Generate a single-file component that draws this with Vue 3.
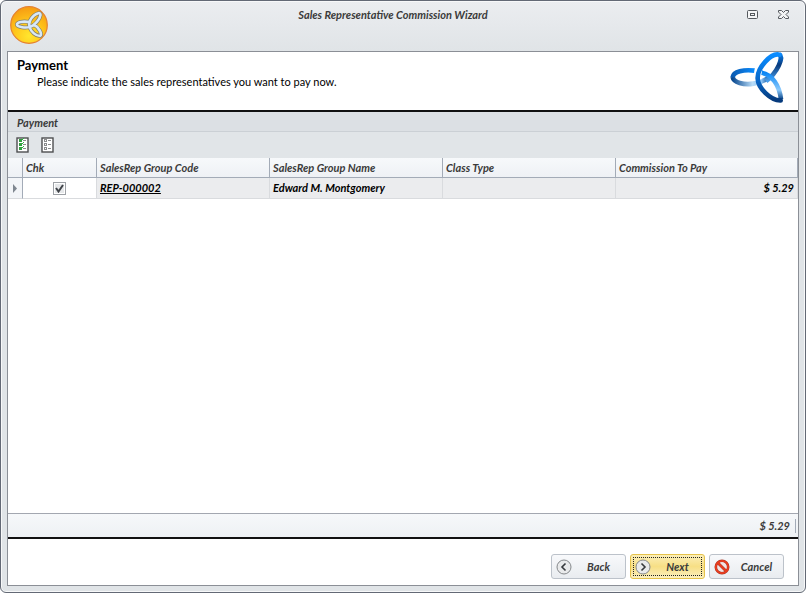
<template>
  <div class="window">
    <header class="title-bar">
      <svg class="app-icon" viewBox="0 0 40 40" aria-hidden="true">
        <defs>
          <radialGradient id="orb" cx="50%" cy="80%" r="75%">
            <stop offset="0" stop-color="#ffe62e" />
            <stop offset="0.5" stop-color="#ffc81c" />
            <stop offset="1" stop-color="#f7a013" />
          </radialGradient>
        </defs>
        <circle cx="20" cy="20" r="18.3" fill="url(#orb)" stroke="#e58232" stroke-width="1.2" />
        <g v-for="ring in orbRings" :key="ring.color" fill="none" :stroke="ring.color" :stroke-width="ring.width" stroke-linejoin="round">
          <path d="M20 17C14 16 8 17 8 19.500C8 22 17 23.500 22 21.500C26 20 31 14 31.500 10C31.500 7 28 8 25 10.500C21 14 19.500 18 20.500 22C22 27 27 31 31 31C34 30 30 22 24 19" />
        </g>
      </svg>
      <h1>Sales Representative Commission Wizard</h1>
      <div class="window-buttons">
        <button type="button" aria-label="Maximize">
          <svg viewBox="0 0 13 11" width="13" height="11">
            <rect x="1.5" y="1.5" width="10" height="8" rx="1" fill="#f4f5f6" stroke="#55595e" />
            <rect x="4.5" y="4.5" width="4" height="2" fill="none" stroke="#55595e" />
          </svg>
        </button>
        <button type="button" aria-label="Close">
          <svg viewBox="0 0 13 11" width="13" height="11">
            <path d="M1.5 1.5h3l2 2 2-2h3v1.5l-2.5 2.5 2.5 2.5v1.5h-3l-2-2-2 2h-3V8L4 5.5 1.5 3z" fill="#f4f5f6" stroke="#55595e" />
          </svg>
        </button>
      </div>
    </header>

    <main class="panel">
      <section class="intro">
        <div>
          <h2>Payment</h2>
          <p>Please indicate the sales representatives you want to pay now.</p>
        </div>
        <svg class="logo" viewBox="12 12 180 168" aria-hidden="true">
          <defs>
            <linearGradient id="ringLeftTop" x1="0" y1="0" x2="1" y2="0">
              <stop offset="0" stop-color="#0a5cb4" />
              <stop offset="1" stop-color="#0a8cff" />
            </linearGradient>
            <linearGradient id="ringLeftBottom" x1="0" y1="0" x2="1" y2="0">
              <stop offset="0" stop-color="#08488f" />
              <stop offset="0.55" stop-color="#b8dcf8" />
              <stop offset="0.8" stop-color="#8cc4f4" />
              <stop offset="1" stop-color="#0b4c98" />
            </linearGradient>
            <linearGradient id="ringMain" x1="0" y1="0" x2="0" y2="1">
              <stop offset="0" stop-color="#0a8cff" />
              <stop offset="0.55" stop-color="#0868ca" />
              <stop offset="1" stop-color="#063a7c" />
            </linearGradient>
            <linearGradient id="ringSide" x1="0" y1="0" x2="0" y2="1">
              <stop offset="0" stop-color="#0a7ce8" />
              <stop offset="0.4" stop-color="#083a7c" />
              <stop offset="1" stop-color="#4a9fec" />
            </linearGradient>
            <linearGradient id="ringInner" x1="0" y1="0" x2="0" y2="1">
              <stop offset="0" stop-color="#0a86f5" />
              <stop offset="0.65" stop-color="#8ccafc" />
              <stop offset="1" stop-color="#0b4487" />
            </linearGradient>
          </defs>
          <g fill="none" stroke-width="14">
            <path stroke="url(#ringLeftBottom)" d="M26 87C28 103 60 112 88 107C104 104 122 98 134 88" />
            <path stroke="url(#ringLeftTop)" d="M26 88C28 70 60 64 92 68" />
            <path stroke="url(#ringSide)" d="M166 19C180 28 160 74 126 99" />
            <path stroke="url(#ringInner)" d="M112 74C145 80 166 112 171 154" />
            <path stroke="#fff" stroke-width="22" d="M104 60C101 72 100 85 102 96" />
            <path stroke="url(#ringMain)" stroke-linecap="round" d="M166 20C140 14 100 60 101 91C102 120 140 158 170 157" />
          </g>
        </svg>
      </section>

      <h3 class="caption">Payment</h3>
      <div class="toolbar">
        <button v-for="tool in tools" :key="tool.label" type="button" :aria-label="tool.label" @click="setAll(tool.checked)">
          <svg viewBox="0 0 14 16" width="14" height="16">
            <rect x="1" y="1" width="11" height="14" fill="#fff" stroke="#4d4f50" stroke-width="1.4" />
            <g v-for="y in [2, 6, 10]" :key="y">
              <rect x="3.5" :y="y + 0.5" width="2" height="2" fill="none" :stroke="tool.checked ? '#329a41' : '#8a8c8d'" />
              <path :d="`M7 ${y + 1.5}h3`" stroke="#8a8c8d" />
              <path v-if="tool.checked" :d="`M4 ${y + 1}l1 1 3-3`" fill="none" stroke="#2db03d" />
            </g>
          </svg>
        </button>
      </div>

      <div class="grid">
        <table>
          <colgroup>
            <col class="col-mark" />
            <col class="col-check" />
            <col class="col-text" />
            <col class="col-text" />
            <col class="col-text" />
            <col />
          </colgroup>
          <thead>
            <tr>
              <th aria-label="Current row"></th>
              <th v-for="column in columns" :key="column" scope="col">{{ column }}</th>
            </tr>
          </thead>
          <tbody>
            <tr v-for="rep in reps" :key="rep.code">
              <td class="mark">
                <svg viewBox="0 0 6 9" width="6" height="9"><path d="M1 0l4 4.5-4 4.5z" fill="#7f8790" /></svg>
              </td>
              <td class="check"><input v-model="rep.checked" type="checkbox" :aria-label="`Pay ${rep.name}`" /></td>
              <td><a href="#">{{ rep.code }}</a></td>
              <td>{{ rep.name }}</td>
              <td>{{ rep.classType }}</td>
              <td class="amount">{{ money(rep.commission) }}</td>
            </tr>
          </tbody>
        </table>
      </div>

      <div class="summary"><span>{{ money(total) }}</span></div>

      <footer class="actions">
        <button type="button">
          <svg viewBox="0 0 16 16" width="16" height="16">
            <circle cx="8" cy="8" r="7" fill="#e9eaeb" stroke="#85888b" />
            <path d="M9.5 4.5L6 8l3.5 3.5" fill="none" stroke="#36393c" stroke-width="1.6" />
          </svg>
          <span>Back</span>
        </button>
        <button type="button" class="primary">
          <svg viewBox="0 0 16 16" width="16" height="16">
            <circle cx="8" cy="8" r="7" fill="#e9eaeb" stroke="#85888b" />
            <path d="M6.5 4.5L10 8l-3.5 3.5" fill="none" stroke="#36393c" stroke-width="1.6" />
          </svg>
          <span>Next</span>
        </button>
        <button type="button">
          <svg viewBox="0 0 16 16" width="16" height="16">
            <g fill="none" stroke="#a33a2c" stroke-width="2.6">
              <circle cx="8" cy="8" r="6.2" fill="#f1e4e4" />
              <path d="M4 4l8 8" />
            </g>
            <g fill="none" stroke="#ea3c1e" stroke-width="1.8">
              <circle cx="8" cy="8" r="6.2" />
              <path d="M4 4l8 8" />
            </g>
          </svg>
          <span>Cancel</span>
        </button>
      </footer>
    </main>
  </div>
</template>

<script setup>
import { computed, ref } from 'vue'

const columns = ['Chk', 'SalesRep Group Code', 'SalesRep Group Name', 'Class Type', 'Commission To Pay']

// dark outline first, light ring on top
const orbRings = [
  { color: '#85806a', width: 4 },
  { color: '#d7e8f8', width: 2.6 }
]

const tools = [
  { label: 'Select all', checked: true },
  { label: 'Clear all', checked: false }
]

const reps = ref([
  { code: 'REP-000002', name: 'Edward M. Montgomery', classType: '', commission: 5.29, checked: true }
])

// only ticked rows are paid
const total = computed(() =>
  reps.value.filter((rep) => rep.checked).reduce((sum, rep) => sum + rep.commission, 0)
)

function setAll(checked) {
  reps.value.forEach((rep) => (rep.checked = checked))
}

function money(value) {
  return `$ ${value.toFixed(2)}`
}
</script>

<style>
body {
  margin: 0;
  background: #fff;
}
</style>

<style scoped>
.window {
  box-sizing: border-box;
  display: flex;
  flex-direction: column;
  min-height: 100vh;
  padding: 0 6px 6px;
  border: 1px solid #636975;
  border-radius: 6px;
  background: linear-gradient(#ebedf0, #e0e4e7 50px);
  box-shadow: inset 0 0 0 1px #f7f8f9;
  color: #3b3b3b;
  font-family: Lato, 'Liberation Sans', sans-serif;
  font-size: 11px;
  line-height: 14px;
}

h1,
h2,
h3,
p {
  margin: 0;
}

button {
  padding: 0;
  border: 0;
  background: none;
  color: inherit;
  font: inherit;
}

svg {
  display: block;
}

/* title bar */
.title-bar {
  display: grid;
  grid-template-columns: 60px 1fr 80px;
  height: 50px;
}

.app-icon {
  width: 40px;
  height: 40px;
  margin: 4px 0 0 2px;
}

.title-bar h1 {
  padding-top: 7px;
  font-size: 11px;
  font-style: italic;
  font-weight: bold;
  text-align: center;
}

.window-buttons {
  display: flex;
  justify-content: flex-end;
  align-items: flex-start;
  gap: 18px;
  padding: 8px 9px 0 0;
}

/* panel */
.panel {
  flex: 1;
  display: flex;
  flex-direction: column;
  border: 1px solid #8b8f96;
  background: #fff;
}

.intro {
  display: flex;
  justify-content: space-between;
  height: 58px;
  padding: 0 10px 0 9px;
  border-bottom: 2px solid #111;
}

.intro h2 {
  padding-top: 5px;
  color: #000;
  font-size: 13px;
  line-height: 16px;
}

.intro p {
  padding: 2px 0 0 20px;
  color: #000;
}

.logo {
  width: 60px;
  height: 56px;
}

.caption {
  height: 19px;
  padding-left: 9px;
  border-bottom: 1px solid #cbd0d5;
  background: #dce0e4;
  font-size: 11px;
  font-style: italic;
  line-height: 22px;
}

.toolbar {
  display: flex;
  gap: 11px;
  height: 21px;
  padding: 5px 8px 0;
  background: #e1e5e8;
}

.toolbar button {
  height: 16px;
}

/* grid */
.grid {
  flex: 1;
}

table {
  width: 100%;
  table-layout: fixed;
  border-spacing: 0;
  font-style: italic;
}

.col-mark {
  width: 15px;
}

.col-check {
  width: 74px;
}

.col-text {
  width: 173px;
}

th {
  height: 19px;
  padding: 0 3px;
  border-right: 1px solid #a3abb7;
  border-bottom: 1px solid #a3abb7;
  background: linear-gradient(#f7f9fb, #eef1f5);
  text-align: left;
}

td {
  height: 20px;
  padding: 0 3px;
  border-right: 1px solid #d9dbde;
  border-bottom: 1px solid #d9dbde;
  background: #ebecee;
  color: #000;
  font-weight: bold;
}

.mark {
  padding: 0 0 0 4px;
  border-right-color: #a3abb7;
  background: #f3f5f8;
}

.check {
  background: #fff;
}

.check input {
  appearance: none;
  box-sizing: border-box;
  display: block;
  width: 13px;
  height: 13px;
  margin: 0 auto;
  border: 1px solid #9da1a6;
  background: #e6e8ea;
  box-shadow: inset 0 0 0 1px #fff;
}

.check input:checked {
  background: #e6e8ea url("data:image/svg+xml,%3Csvg xmlns='http://www.w3.org/2000/svg' viewBox='0 0 11 11'%3E%3Cpath d='M2 5l2.5 3.5L9 2' fill='none' stroke='%23404449' stroke-width='2'/%3E%3C/svg%3E") center / 11px 11px no-repeat;
}

td a {
  color: #000;
}

.amount {
  text-align: right;
}

.summary {
  display: flex;
  justify-content: flex-end;
  align-items: center;
  height: 23px;
  padding-right: 2px;
  border-top: 1px solid #a3a7b0;
  border-bottom: 2px solid #111;
  background: linear-gradient(#f6f8fa, #eef1f4);
  font-style: italic;
  font-weight: bold;
}

.summary span {
  padding-right: 5px;
  border-right: 1px solid #a3abb7;
}

/* wizard buttons */
.actions {
  display: flex;
  justify-content: flex-end;
  gap: 4px;
  padding: 15px 14px 6px;
}

.actions button {
  display: flex;
  align-items: center;
  width: 75px;
  height: 25px;
  padding: 0 4px;
  border: 1px solid #bcc2ca;
  border-radius: 3px;
  background: linear-gradient(#f8f9fb, #e9ecf0);
  font-style: italic;
  font-weight: bold;
}

.actions span {
  flex: 1;
  padding-left: 4px;
  text-align: center;
}

.actions .primary {
  border-color: #e5c24b;
  background: linear-gradient(#fbeeb8, #f7df85 50%, #fbefbd);
  outline: 1px dotted #222;
  outline-offset: -4px;
}
</style>
